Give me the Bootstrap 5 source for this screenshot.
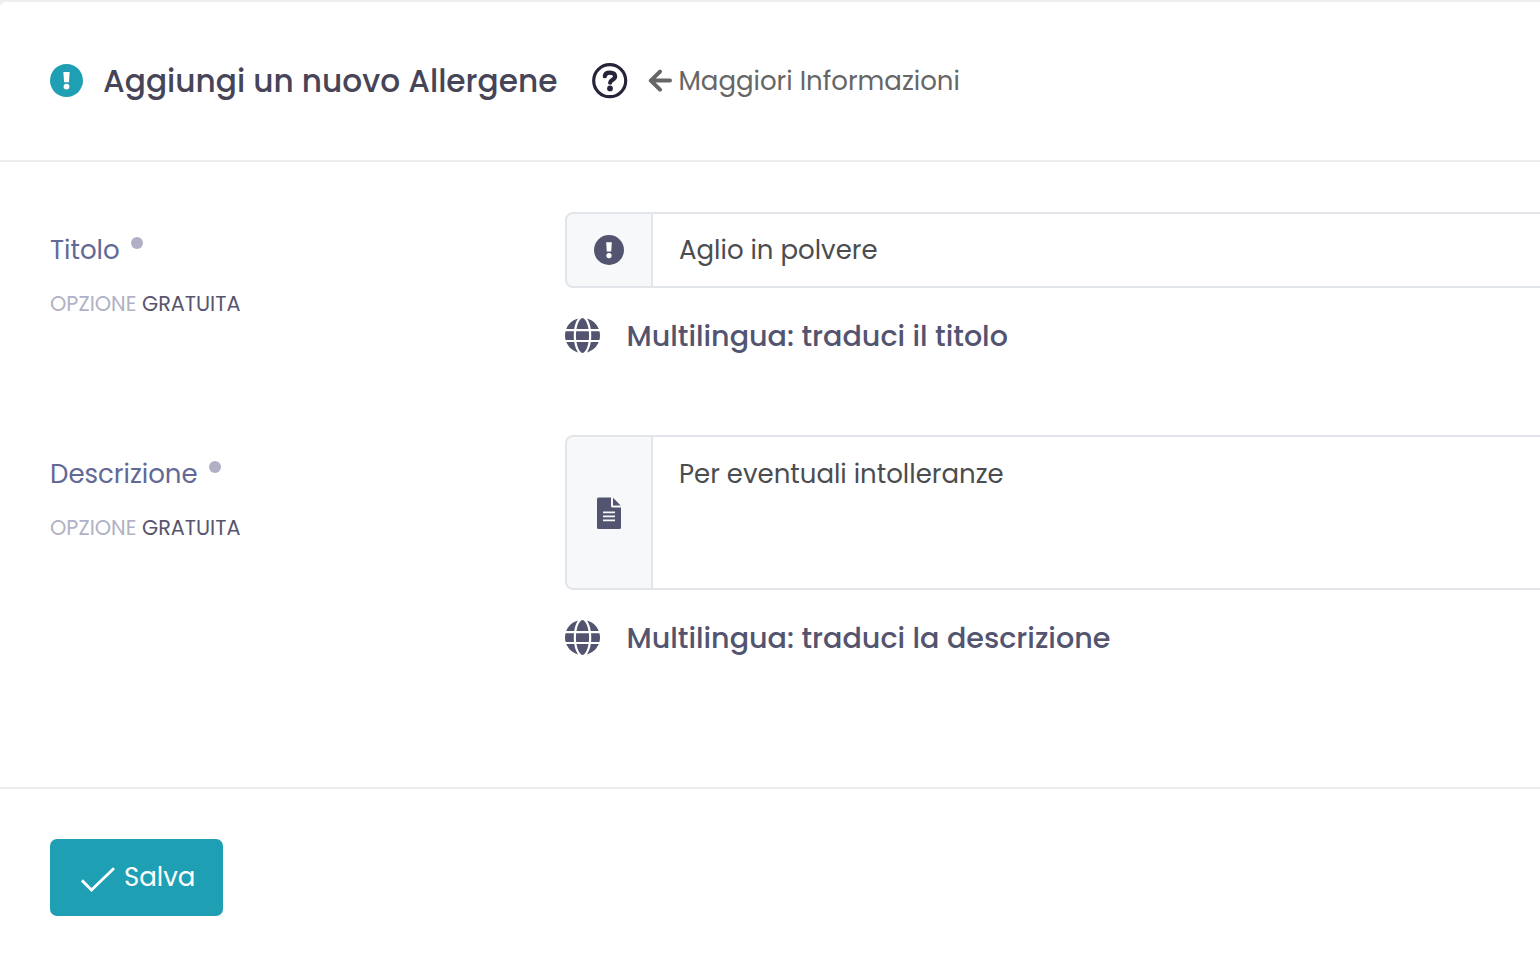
<!DOCTYPE html>
<html lang="it">
<head>
<meta charset="utf-8">
<title>Aggiungi un nuovo Allergene</title>
<link href="https://cdn.jsdelivr.net/npm/bootstrap@5.3.0/dist/css/bootstrap.min.css" rel="stylesheet">
<style>
body{background:#efeff0;font-family:Poppins,Inter,"Open Sans",sans-serif;font-size:26px;line-height:38px;overflow:hidden;height:956px}
.panel{margin-top:2px;height:954px;border:0;border-radius:6px 0 0 0;background:#fff}
.panel .card-header{height:160px;background:#fff;border-bottom:2px solid #ececee;border-radius:6px 0 0 0;padding:0 50px 1px}
.panel .card-body{padding:50px 0 0 50px}
.panel .card-footer{height:169px;background:#fff;border-top:2px solid #ebedef;border-radius:0;padding:50px}
svg{display:block;flex:none}
.heading{font-size:31.2px;font-weight:500;color:#464457;margin:2px 35px 0 20px;white-space:nowrap}
.arrow{margin-left:20px}
.info{color:#666;margin:1px 0 0 6px;white-space:nowrap}
.label-col{width:515px;flex:none;padding-top:19px}
.field-label{color:#626995}
.dot{width:12px;height:12px;border-radius:50%;background:#b1afc6;margin:6px 0 0 11px}
.option{font-size:20.8px;line-height:30px;color:#b1b2c5;margin-top:20px}
.option b{font-weight:400;color:#57546d}
.field .input-group-text{width:88px;background:#f6f8fa;border:2px solid #e2e5e9;border-radius:8px 0 0 8px;justify-content:center;padding:0;color:#53546f}
.field .form-control{background:transparent;border:2px solid #e2e5e9;border-width:2px 0;border-radius:0;font-size:26px;line-height:38px;padding:17px 26px 17px 27px;color:#4b4d50;resize:none;overflow:hidden}
.field input.form-control{height:76px}
.field textarea.form-control{height:155px;padding-top:18px}
.form-row:first-child{height:223px}
.form-row:last-child .label-col{padding-top:20px}
.translate{color:#53546f;font-size:28.6px;font-weight:500;gap:26.5px;margin-top:29px}
.translate svg{margin-bottom:1px}
.btn-save,.btn-save:hover{background:#1e9fb4;color:#fff;width:173px;height:77px;border:0;border-radius:7px;font-size:26px;padding:0 0 0 31px}
.btn-save svg{margin:5px 9px 0 0}
</style>
</head>
<body>
<svg width="0" height="0" class="position-absolute">
<symbol id="bang" viewBox="0 0 34 34"><circle cx="17" cy="17" r="17" fill="currentColor"/><path d="M13.800 8.200h6.400l-.7 10.600h-5z" fill="#fff"/><circle cx="17" cy="23.300" r="3" fill="#fff"/></symbol>
<symbol id="globe" viewBox="0 0 512 512"><g fill="currentColor"><path d="M352 256c0 22.200-1.200 43.600-3.300 64H163.300c-2.200-20.400-3.300-41.800-3.300-64s1.200-43.600 3.300-64H348.700c2.200 20.400 3.300 41.800 3.300 64zM380.800 192H503.900c5.300 20.500 8.100 41.900 8.100 64s-2.800 43.500-8.100 64H380.800c2.100-20.600 3.200-42 3.200-64s-1.100-43.400-3.200-64zM8.100 192H131.200c-2.100 20.600-3.200 42-3.200 64s1.100 43.400 3.200 64H8.100C2.800 299.500 0 278.100 0 256s2.800-43.500 8.100-64z"/><path id="cap" d="M493.400 160H376.700c-10-63.900-29.800-117.400-55.300-151.600c78.300 20.700 142 77.500 171.900 151.600zM344.300 160H167.700c6.100-36.400 15.500-68.600 27-94.700c10.500-23.600 22.200-40.700 33.500-51.500C239.400 3.200 248.700 0 256 0s16.600 3.200 27.800 13.800c11.300 10.800 23 27.900 33.500 51.500c11.600 26 20.900 58.200 27 94.700zM135.300 160H18.600C48.600 85.900 112.200 29.100 190.600 8.400C165.100 42.600 145.300 96.100 135.300 160z"/><use href="#cap" transform="matrix(1 0 0 -1 0 512)"/></g></symbol>
</svg>
<main class="card panel">
<header class="card-header d-flex align-items-center">
<svg width="33" height="33" style="color:#1e9fb4"><use href="#bang"/></svg>
<h1 class="heading">Aggiungi un nuovo Allergene</h1>
<svg width="36" height="36" viewBox="0 0 36 36" fill="none" stroke="#26243a"><circle cx="17.700" cy="17.700" r="16" stroke-width="3.200"/><path d="M12.800 13.200c.3-2.600 2.300-3.600 5.100-3.600 3.200 0 5.200 1.500 5.200 4 0 3.300-5 3.200-5 6.100" stroke-width="4.200" stroke-linecap="round"/><circle cx="18" cy="25.400" r="2.900" fill="#26243a" stroke="none"/></svg>
<svg class="arrow" width="24" height="24" viewBox="0 0 24 24" fill="none" stroke="#666" stroke-width="4" stroke-linecap="round" stroke-linejoin="round"><path d="M12 2.600 2.800 11.600 12 20.600M3 11.600h19"/></svg>
<span class="info">Maggiori Informazioni</span>
</header>
<section class="card-body">
<div class="form-row d-flex">
<div class="label-col">
<div class="d-flex"><label class="field-label" for="titolo">Titolo</label><span class="dot"></span></div>
<div class="option">OPZIONE <b>GRATUITA</b></div>
</div>
<div class="field flex-grow-1">
<div class="input-group">
<span class="input-group-text"><svg width="30" height="30"><use href="#bang"/></svg></span>
<input id="titolo" class="form-control" value="Aglio in polvere">
</div>
<div class="translate d-flex align-items-center"><svg width="35" height="35"><use href="#globe"/></svg><span>Multilingua: traduci il titolo</span></div>
</div>
</div>
<div class="form-row d-flex">
<div class="label-col">
<div class="d-flex"><label class="field-label" for="descrizione">Descrizione</label><span class="dot"></span></div>
<div class="option">OPZIONE <b>GRATUITA</b></div>
</div>
<div class="field flex-grow-1">
<div class="input-group">
<span class="input-group-text"><svg width="24" height="32" viewBox="0 0 24 32"><path fill="currentColor" d="M1.500 .5H14v8.500q0 1.500 1.500 1.500H24v20q0 1.500-1.500 1.500h-21Q0 32 0 30.500v-28.500Q0 .5 1.500 .5zM16 .8 23.700 8.500H16z"/><path stroke="#f6f8fa" stroke-width="1.900" d="M6 15.400h12M6 19.400h12M6 23.400h12"/></svg></span>
<textarea id="descrizione" class="form-control" spellcheck="false">Per eventuali intolleranze</textarea>
</div>
<div class="translate d-flex align-items-center"><svg width="35" height="35"><use href="#globe"/></svg><span>Multilingua: traduci la descrizione</span></div>
</div>
</div>
</section>
<footer class="card-footer">
<button type="button" class="btn btn-save d-flex align-items-center"><svg width="34" height="26" viewBox="0 0 34 26" fill="none" stroke="#fff" stroke-width="2.800"><path d="M.9 13.300 10.500 23 33 1.200"/></svg>Salva</button>
</footer>
</main>
<script src="https://cdn.jsdelivr.net/npm/bootstrap@5.3.0/dist/js/bootstrap.bundle.min.js"></script>
</body>
</html>
